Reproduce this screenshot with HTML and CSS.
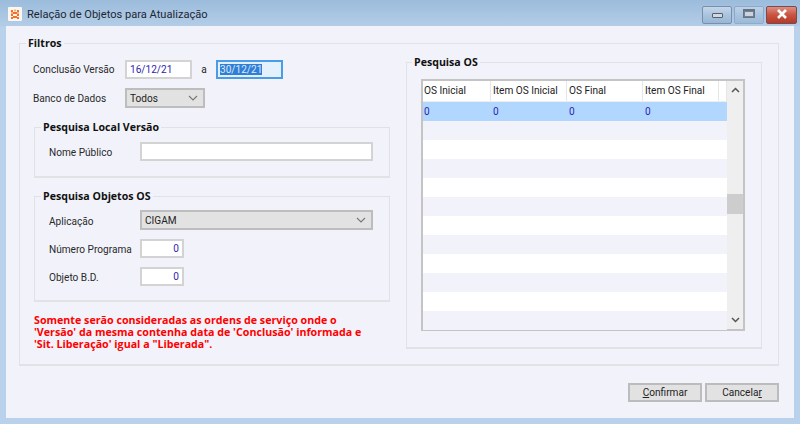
FILE: index.html
```html
<!DOCTYPE html>
<html lang="pt">
<head>
<meta charset="utf-8">
<title>Relação de Objetos para Atualização</title>
<link rel="stylesheet" href="styles.css">
</head>
<body>
<div class="window">
  <header class="titlebar">
    <span class="app-icon">
      <svg width="14" height="14" viewBox="0 0 14 14"><rect width="14" height="14" rx="1" fill="#fdf6f0"/><path d="M3 3h2v2H3zM9 3h2v2H9zM5 5h2v2H5zM7 5h2v2H7zM3 7h2v2H3zM9 7h2v2H9zM5 9h2v2H5zM7 9h2v2H7zM3 10h2v2H3zM9 10h2v2H9z" fill="#f4702a"/><path d="M6 2.500h2v2H6zM3 5h2v2H3zM9 5h2v2H9z" fill="#f8b080"/></svg>
    </span>
    <span class="title">Relação de Objetos para Atualização</span>
    <div class="controls">
      <span class="ctl ctl-min"><i class="glyph-min"></i></span>
      <span class="ctl ctl-max"><i class="glyph-max"></i></span>
      <span class="ctl ctl-close">
        <svg class="glyph-close" width="12" height="10" viewBox="0 0 12 10"><path d="M2 1l8 8M10 1L2 9" stroke="#fff" stroke-width="2.6"/></svg>
      </span>
    </div>
  </header>
  <main class="client">
    <section class="group filters">
      <h2 class="legend">Filtros</h2>
      <div class="left">
        <div class="row row-date">
          <label class="label label-main">Conclusão Versão</label>
          <span class="input date value">16/12/21</span>
          <span class="sep">a</span>
          <span class="input date focus"><span class="selected">30/12/21</span></span>
        </div>
        <div class="row row-db">
          <label class="label label-main">Banco de Dados</label>
          <span class="select select-db">Todos
            <svg class="chev" width="10" height="6" viewBox="0 0 10 6"><path d="M1 1l4 4 4-4" fill="none" stroke="#777" stroke-width="1.100"/></svg>
          </span>
        </div>
        <section class="group sub sub-local">
          <h2 class="legend">Pesquisa Local Versão</h2>
          <div class="row">
            <label class="label label-sub">Nome Público</label>
            <span class="input wide"></span>
          </div>
        </section>
        <section class="group sub sub-obj">
          <h2 class="legend">Pesquisa Objetos OS</h2>
          <div class="row">
            <label class="label label-sub">Aplicação</label>
            <span class="select wide">CIGAM
              <svg class="chev" width="10" height="6" viewBox="0 0 10 6"><path d="M1 1l4 4 4-4" fill="none" stroke="#777" stroke-width="1.100"/></svg>
            </span>
          </div>
          <div class="row row-num">
            <label class="label label-sub">Número Programa</label>
            <span class="input num value">0</span>
          </div>
          <div class="row row-num">
            <label class="label label-sub">Objeto B.D.</label>
            <span class="input num value">0</span>
          </div>
        </section>
        <p class="notice">Somente serão consideradas as ordens de serviço onde o<br>'Versão' da mesma contenha data de 'Conclusão' informada e<br>'Sit. Liberação' igual a "Liberada".</p>
      </div>
      <section class="group os">
        <h2 class="legend">Pesquisa OS</h2>
        <div class="list">
          <div class="grid">
            <div class="tr head"><span>OS Inicial</span><span>Item OS Inicial</span><span>OS Final</span><span>Item OS Final</span><span></span></div>
            <div class="tr active"><span>0</span><span>0</span><span>0</span><span>0</span></div>
            <div class="tr alt"></div><div class="tr"></div><div class="tr alt"></div><div class="tr"></div>
            <div class="tr alt"></div><div class="tr"></div><div class="tr alt"></div><div class="tr"></div>
            <div class="tr alt"></div><div class="tr"></div><div class="tr alt"></div>
          </div>
          <div class="scrollbar">
            <svg width="9" height="6" viewBox="0 0 9 6"><path d="M1 5l3.500-3.500L8 5" fill="none" stroke="#555" stroke-width="1.500"/></svg>
            <i class="thumb"></i>
            <svg width="9" height="6" viewBox="0 0 9 6"><path d="M1 1l3.500 3.500L8 1" fill="none" stroke="#555" stroke-width="1.500"/></svg>
          </div>
        </div>
      </section>
    </section>
    <footer class="actions">
      <button class="btn" type="button"><u>C</u>onfirmar</button>
      <button class="btn" type="button">Cancela<u>r</u></button>
    </footer>
  </main>
</div>
</body>
</html>
```
FILE: styles.css
```css
* { box-sizing: border-box; }
html, body { margin: 0; height: 100%; }
body { font: 10.1px Roboto, "Liberation Sans", sans-serif; color: #222; background: #b9d1ea; overflow: hidden; }
.window { width: 800px; height: 424px; display: flex; flex-direction: column; padding: 0 6px 6px; background: linear-gradient(180deg, #9cbcdc 0, #b3cde7 26px, #b9d1ea 27px); }
.titlebar { height: 26px; flex: none; display: flex; align-items: center; margin-right: -3px; padding-left: 2px; }
.app-icon { width: 14px; height: 14px; display: flex; margin-top: 2px; }
.title { margin-left: 5px; margin-top: 2px; font-size: 11.1px; color: #1d2733; }
.controls { margin-left: auto; display: flex; gap: 2px; align-self: flex-start; padding-top: 6px; }
.ctl { width: 30px; height: 18px; border: 1px solid #7d8fa8; border-radius: 2px; display: flex; align-items: center; justify-content: center; background: linear-gradient(180deg, #c4d7ea, #a9c4df 50%, #98b6d4); }
.ctl-max { opacity: .8; border-color: #8aa3bf; }
.ctl-close { width: 31px; border-color: #7a4a50; background: linear-gradient(180deg, #dc8f82, #c8543f 50%, #b43a2a); }
.glyph-min { width: 11px; height: 5px; background: #d4d8de; border: 1px solid #555f6e; border-radius: 1px; }
.glyph-max { width: 12px; height: 9px; margin-top: -3px; background: #d4d8de; border: 1px solid #555f6e; box-shadow: inset 0 0 0 1px #666f80; border-width: 2px 1px 1px; }
.glyph-close { margin-top: -3px; }
.client { flex: 1; background: #f2f3fa; padding: 17px 15px 16px 13px; display: flex; flex-direction: column; }
.group { position: relative; border: 2px solid #e1e2e6; border-width: 1px 1px 2px 1px; }
.legend { position: absolute; margin: 0; top: -8px; left: 6px; padding: 0 2px; font: 700 10.6px/15px "Open Sans", sans-serif; background: #f2f3fa; color: #111; white-space: nowrap; }
.filters { height: 323px; display: flex; padding: 16px 16px 16px 13px; gap: 16px; }
.left { width: 357px; flex: none; display: flex; flex-direction: column; }
.row { display: flex; align-items: center; flex: none; }
.row-db { margin-top: 9px; }
.label { display: block; white-space: nowrap; color: #2a2a2a; }
.label-main { width: 92px; }
.label-sub { width: 91px; padding-top: 2px; }
.input { height: 19px; border: 2px solid #d3d3d3; background: #fff; display: block; line-height: 15px; padding: 0 3px; }
.value { color: #2b1fb0; }
.date { width: 67px; }
.focus { border-color: #4a9be8; background: #e3f0fd; padding: 0 2px; }
.selected { background: #2f7fd8; color: #dfe9f5; }
.sep { width: 24px; text-align: center; }
.select { height: 20px; border: 2px solid #bdbdbd; background: #e2e2e2; display: flex; align-items: center; justify-content: space-between; padding: 0 5px 0 3px; }
.select-db { width: 80px; }
.wide { width: 233px; }
.num { width: 44px; text-align: right; }
.sub { margin-left: 1px; padding-left: 14px; flex: none; }
.sub-local { height: 51px; margin-top: 19px; padding-top: 14px; }
.sub-obj { height: 106px; margin-top: 18px; padding-top: 13px; }
.row-num { margin-top: 9px; }
.notice { margin: 12px 0 0 1px; flex: none; font: 700 10.7px/12px "Open Sans", sans-serif; color: #ff0000; white-space: nowrap; }
.os { width: 356px; height: 287px; margin-top: 2px; padding: 16px 17px 0 14px; }
.os .legend { left: 5px; }
.list { width: 324px; height: 252px; border: 2px solid #c4c4c4; display: flex; background: #fff; }
.grid { flex: 1; }
.tr { height: 19px; display: grid; grid-template-columns: 68px 76px 76px 76px 8px; align-items: center; }
.tr span { padding-left: 2px; white-space: nowrap; }
.tr span:first-child { padding-left: 1px; }
.head { height: 21px; border-bottom: 1px solid #eeeeee; }
.head span { height: 100%; line-height: 20px; border-right: 1px solid #e6e6e6; }
.active { background: #b2d7ff; color: #2b1fb0; }
.alt { background: #f2f3fa; }
.scrollbar { width: 16px; position: relative; background: #efefef; display: flex; flex-direction: column; align-items: center; justify-content: space-between; padding: 6px 0; }
.thumb { position: absolute; top: 113px; left: 0; width: 100%; height: 20px; background: #cdcdcd; }
.actions { margin-top: 17px; display: flex; justify-content: flex-end; gap: 3px; }
.btn { width: 74px; height: 19px; padding: 0; font: inherit; color: #222; background: #e2e2e2; border: 2px solid #bcbcbc; }
```
